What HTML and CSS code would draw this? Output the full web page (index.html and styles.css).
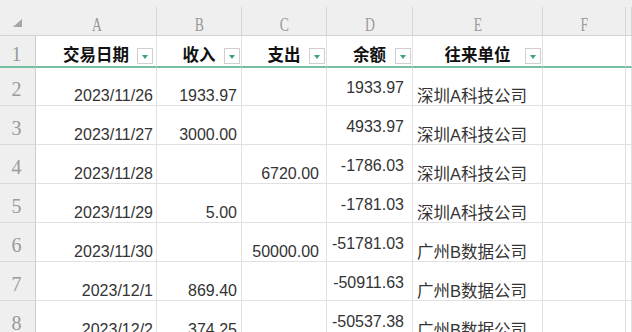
FILE: index.html
```html
<!DOCTYPE html>
<html lang="zh-CN">
<head>
<meta charset="utf-8">
<title>Sheet</title>
<link rel="stylesheet" href="styles.css">
</head>
<body>
<div class="sheet">
  <div class="corner"><svg width="10" height="9" viewBox="0 0 10 9"><polygon points="9,0 9,8 0,8" fill="#a6a6a6"/></svg></div>
  <div class="ch"><span>A</span></div>
  <div class="ch"><span>B</span></div>
  <div class="ch"><span>C</span></div>
  <div class="ch"><span>D</span></div>
  <div class="ch"><span>E</span></div>
  <div class="ch"><span>F</span></div>
  <div class="ch last"></div>

  <div class="rh r1">1</div>
  <div class="hd first">交易日期<span class="flt"></span></div>
  <div class="hd">收入<span class="flt"></span></div>
  <div class="hd">支出<span class="flt"></span></div>
  <div class="hd">余额<span class="flt"></span></div>
  <div class="hd">往来单位<span class="flt"></span></div>
  <div class="hd"></div>
  <div class="hd"></div>

  <div class="rh">2</div>
  <div class="num a">2023/11/26</div>
  <div class="num b">1933.97</div>
  <div class="num c"></div>
  <div class="num d">1933.97</div>
  <div class="txt">深圳A科技公司</div>
  <div></div><div></div>

  <div class="rh">3</div>
  <div class="num a">2023/11/27</div>
  <div class="num b">3000.00</div>
  <div class="num c"></div>
  <div class="num d">4933.97</div>
  <div class="txt">深圳A科技公司</div>
  <div></div><div></div>

  <div class="rh">4</div>
  <div class="num a">2023/11/28</div>
  <div class="num b"></div>
  <div class="num c">6720.00</div>
  <div class="num d">-1786.03</div>
  <div class="txt">深圳A科技公司</div>
  <div></div><div></div>

  <div class="rh">5</div>
  <div class="num a">2023/11/29</div>
  <div class="num b">5.00</div>
  <div class="num c"></div>
  <div class="num d">-1781.03</div>
  <div class="txt">深圳A科技公司</div>
  <div></div><div></div>

  <div class="rh">6</div>
  <div class="num a">2023/11/30</div>
  <div class="num b"></div>
  <div class="num c">50000.00</div>
  <div class="num d">-51781.03</div>
  <div class="txt">广州B数据公司</div>
  <div></div><div></div>

  <div class="rh">7</div>
  <div class="num a">2023/12/1</div>
  <div class="num b">869.40</div>
  <div class="num c"></div>
  <div class="num d">-50911.63</div>
  <div class="txt">广州B数据公司</div>
  <div></div><div></div>

  <div class="rh">8</div>
  <div class="num a">2023/12/2</div>
  <div class="num b">374.25</div>
  <div class="num c"></div>
  <div class="num d">-50537.38</div>
  <div class="txt">广州B数据公司</div>
  <div></div><div></div>
</div>
</body>
</html>
```
FILE: styles.css
```css
html, body {
  margin: 0;
  padding: 0;
  background: #fff;
  overflow: hidden;
}

.sheet {
  display: grid;
  grid-template-columns: 36px 121px 85px 85px 86px 130px 83px 1fr;
  grid-template-rows: 36px 32px 38px repeat(6, 39px);
  width: 632px;
  font-family: "Liberation Sans", "Noto Sans CJK SC", sans-serif;
  font-size: 16px;
  color: #333;
}

.sheet > div {
  box-sizing: border-box;
  display: flex;
  min-width: 0;
  overflow: hidden;
  border-right: 1px solid #e1e1e1;
  border-bottom: 1px solid #e1e1e1;
  white-space: nowrap;
}

/* top-left corner */
.sheet > .corner {
  background: #efefef;
  border-right: none;
  border-bottom: 1px solid #d2d2d2;
  padding: 19px 0 0 13px;
}
.corner svg { display: block; }

/* column letters */
.sheet > .ch {
  background: #efefef linear-gradient(#d6d6d6, #d6d6d6) right 7px / 1px calc(100% - 7px) no-repeat;
  border-right: none;
  border-bottom: 1px solid #d2d2d2;
  justify-content: center;
  align-items: flex-end;
  font-family: "Liberation Serif", serif;
  font-size: 19px;
  line-height: 20px;
  color: #9a9a9a;
}
.ch span {
  display: inline-block;
  transform: scaleX(0.72);
}

/* row numbers */
.sheet > .rh {
  background: #efefef;
  border-right: 1px solid #cdcdcd;
  border-bottom: 1px solid #d8d8d8;
  justify-content: center;
  align-items: center;
  padding: 5px 2px 0 0;
  font-family: "Liberation Serif", serif;
  font-size: 20px;
  line-height: 20px;
  color: #9a9a9a;
}
.sheet > .rh.r1 {
  border-bottom: 2px solid #74bf9f;
}

/* header row */
.sheet > .hd {
  position: relative;
  justify-content: center;
  align-items: flex-end;
  padding-bottom: 3px;
  border-bottom: 2px solid #74bf9f;
  font-family: "Noto Sans CJK SC", sans-serif;
  font-weight: 700;
  font-size: 16.5px;
  line-height: 18px;
  color: #111;
}

.flt {
  position: absolute;
  right: 1px;
  bottom: 2px;
  width: 16px;
  height: 16px;
  box-sizing: border-box;
  border: 1px solid #cfcfcf;
  background: #fff;
  display: flex;
  align-items: center;
  justify-content: center;
}
.flt::after {
  content: "";
  margin-top: 2px;
  border-left: 3.5px solid transparent;
  border-right: 3.5px solid transparent;
  border-top: 4px solid #3aa283;
}
.hd.first .flt { right: 3px; }

/* data cells */
.sheet > .num {
  justify-content: flex-end;
  align-items: flex-end;
  line-height: 18px;
  padding-right: 4px;
}
.sheet > .num.a { padding-right: 3px; }
.sheet > .num.c { padding-right: 7px; }
.sheet > .num.d {
  padding-right: 8px;
  padding-bottom: 8px;
}

.sheet > .txt {
  justify-content: flex-start;
  align-items: flex-end;
  padding-left: 4px;
  line-height: 18px;
  font-size: 16.5px;
}
```
